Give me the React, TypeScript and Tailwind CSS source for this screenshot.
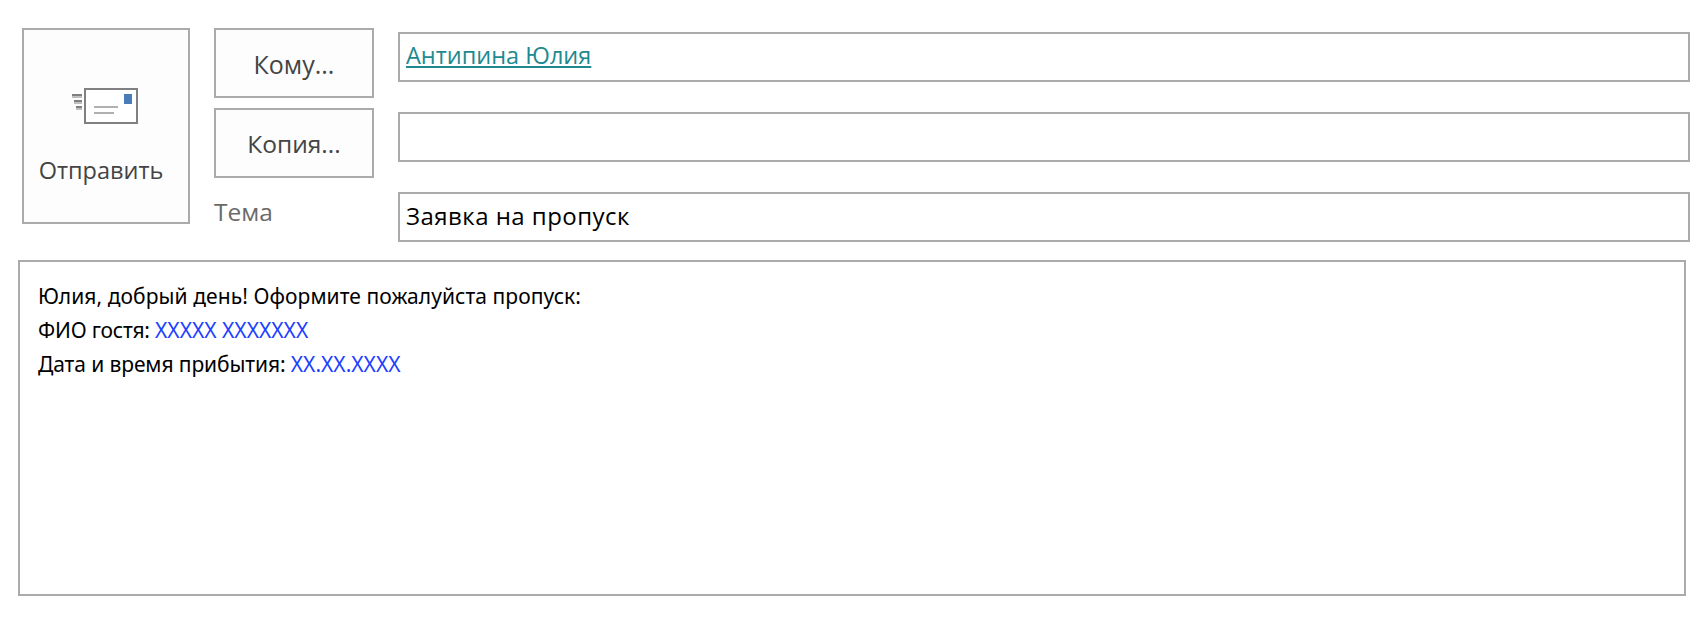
export default function App() {
  return (
    <div className="h-[624px] w-[1708px] overflow-hidden bg-white pt-[28px] font-['Open_Sans',sans-serif]">
      <div className="ml-[22px] flex h-[214px] items-start">
        <button className="flex h-[196px] w-[168px] flex-col items-center border-2 border-[#ababab] bg-[#fdfdfd] text-[#444444]">
          <svg width="68" height="38" viewBox="0 0 68 38" className="mt-[58px] block">
            <rect x="13" y="1" width="52" height="34" fill="#ffffff" stroke="#808080" strokeWidth="2" />
            <rect x="52" y="6" width="8" height="10" fill="#4a7db8" />
            <rect x="22" y="18" width="24" height="2" fill="#b0b0b0" />
            <rect x="22" y="24" width="20" height="2" fill="#b0b0b0" />
            <rect x="0" y="6" width="10" height="2" fill="#808080" />
            <rect x="0" y="8" width="10" height="2" fill="#c0c0c0" />
            <rect x="2" y="12" width="8" height="2" fill="#808080" />
            <rect x="2" y="14" width="8" height="2" fill="#c0c0c0" />
            <rect x="4" y="18" width="6" height="2" fill="#808080" />
            <rect x="4" y="20" width="6" height="2" fill="#c0c0c0" />
          </svg>
          <span className="mt-[29px] mr-[10px] text-[23.5px] leading-[30px]">Отправить</span>
        </button>
        <div className="ml-[24px] flex w-[160px] flex-col gap-[10px]">
          <button className="h-[70px] border-2 border-[#ababab] bg-[#fdfdfd] pt-[3px] text-[25px] text-[#444444]">Кому...</button>
          <button className="h-[70px] border-2 border-[#ababab] bg-[#fdfdfd] pt-[3px] text-[24.5px] text-[#444444]">Копия...</button>
          <div className="mt-[9px] text-[24.5px] leading-[30px] text-[#6a6a6a]">Тема</div>
        </div>
        <div className="mt-[4px] ml-[24px] flex w-[1292px] flex-col gap-[30px]">
          <div className="flex h-[50px] items-center border-2 border-[#ababab] px-[6px] pb-[2px] text-[23.5px] text-[#1e8a8f]">
            <span className="underline decoration-2 underline-offset-2">Антипина Юлия</span>
          </div>
          <div className="h-[50px] border-2 border-[#ababab]" />
          <div className="flex h-[50px] items-center border-2 border-[#ababab] px-[6px] pb-[3px] text-[24px] tracking-[0.47px] text-black">
            Заявка на пропуск
          </div>
        </div>
      </div>
      <div className="mt-[18px] ml-[18px] h-[336px] w-[1668px] border-2 border-[#ababab] px-[18px] pt-[17px] font-['Noto_Sans',sans-serif] text-[21px] leading-[34px] text-black">
        <p className="tracking-[0.07px]">Юлия, добрый день! Оформите пожалуйста пропуск:</p>
        <p>
          <span className="tracking-[-0.2px]">ФИО гостя: </span>
          <span className="text-[#2040ff]">XXXXX XXXXXXX</span>
        </p>
        <p>
          <span className="tracking-[-0.1px]">Дата и время прибытия: </span>
          <span className="text-[#2040ff]">XX.XX.XXXX</span>
        </p>
      </div>
    </div>
  );
}
